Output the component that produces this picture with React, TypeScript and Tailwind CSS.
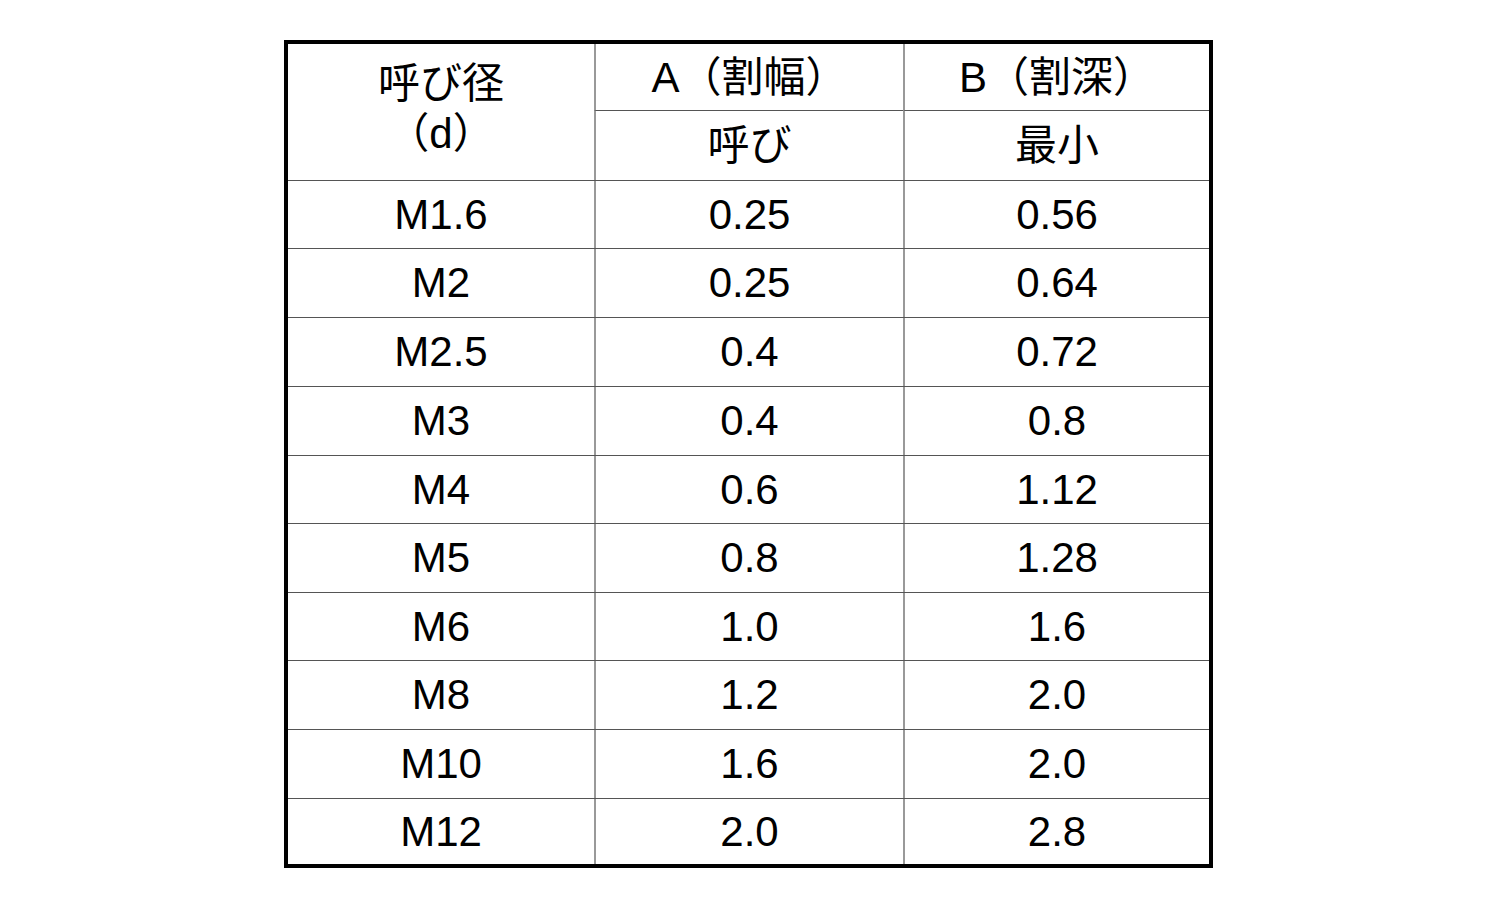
const rows: { d: string; a: string; b: string; h: string }[] = [
  { d: 'M1.6', a: '0.25', b: '0.56', h: 'h-[68px]' },
  { d: 'M2', a: '0.25', b: '0.64', h: 'h-[69px]' },
  { d: 'M2.5', a: '0.4', b: '0.72', h: 'h-[69px]' },
  { d: 'M3', a: '0.4', b: '0.8', h: 'h-[69px]' },
  { d: 'M4', a: '0.6', b: '1.12', h: 'h-[68px]' },
  { d: 'M5', a: '0.8', b: '1.28', h: 'h-[69px]' },
  { d: 'M6', a: '1.0', b: '1.6', h: 'h-[68px]' },
  { d: 'M8', a: '1.2', b: '2.0', h: 'h-[69px]' },
  { d: 'M10', a: '1.6', b: '2.0', h: 'h-[69px]' },
  { d: 'M12', a: '2.0', b: '2.8', h: 'h-[66px]' },
];

const font = "font-['Liberation_Sans','Noto_Sans_CJK_JP',sans-serif]";

export default function App() {
  return (
    <div className={`min-h-[900px] w-[1500px] bg-white pt-[40px] text-black ${font}`}>
      <div className="ml-[284px] w-[929px] border-4 border-black text-[42px] leading-none">
        {/* header */}
        <div className="grid grid-cols-[306px_309px_306px] grid-rows-[67px_69px]">
          <div className="row-span-2 flex flex-col items-center justify-center pb-[6px] leading-[50px]">
            <span>呼び径</span>
            <span>（d）</span>
          </div>
          <div className="flex items-center justify-center border-b border-l-2 border-b-[#555] border-l-[#999] pt-[1px]">
            A（割幅）
          </div>
          <div className="flex items-center justify-center border-b border-l-2 border-b-[#555] border-l-[#999] pt-[1px]">
            B（割深）
          </div>
          <div className="flex items-center justify-center border-l-2 border-l-[#999]">呼び</div>
          <div className="flex items-center justify-center border-l-2 border-l-[#999]">最小</div>
        </div>
        {/* data */}
        {rows.map((r) => (
          <div
            key={r.d}
            className={`grid grid-cols-[306px_309px_306px] border-t border-t-[#555] ${r.h}`}
          >
            <div className="flex items-center justify-center">{r.d}</div>
            <div className="flex items-center justify-center border-l-2 border-l-[#999]">{r.a}</div>
            <div className="flex items-center justify-center border-l-2 border-l-[#999]">{r.b}</div>
          </div>
        ))}
      </div>
    </div>
  );
}
